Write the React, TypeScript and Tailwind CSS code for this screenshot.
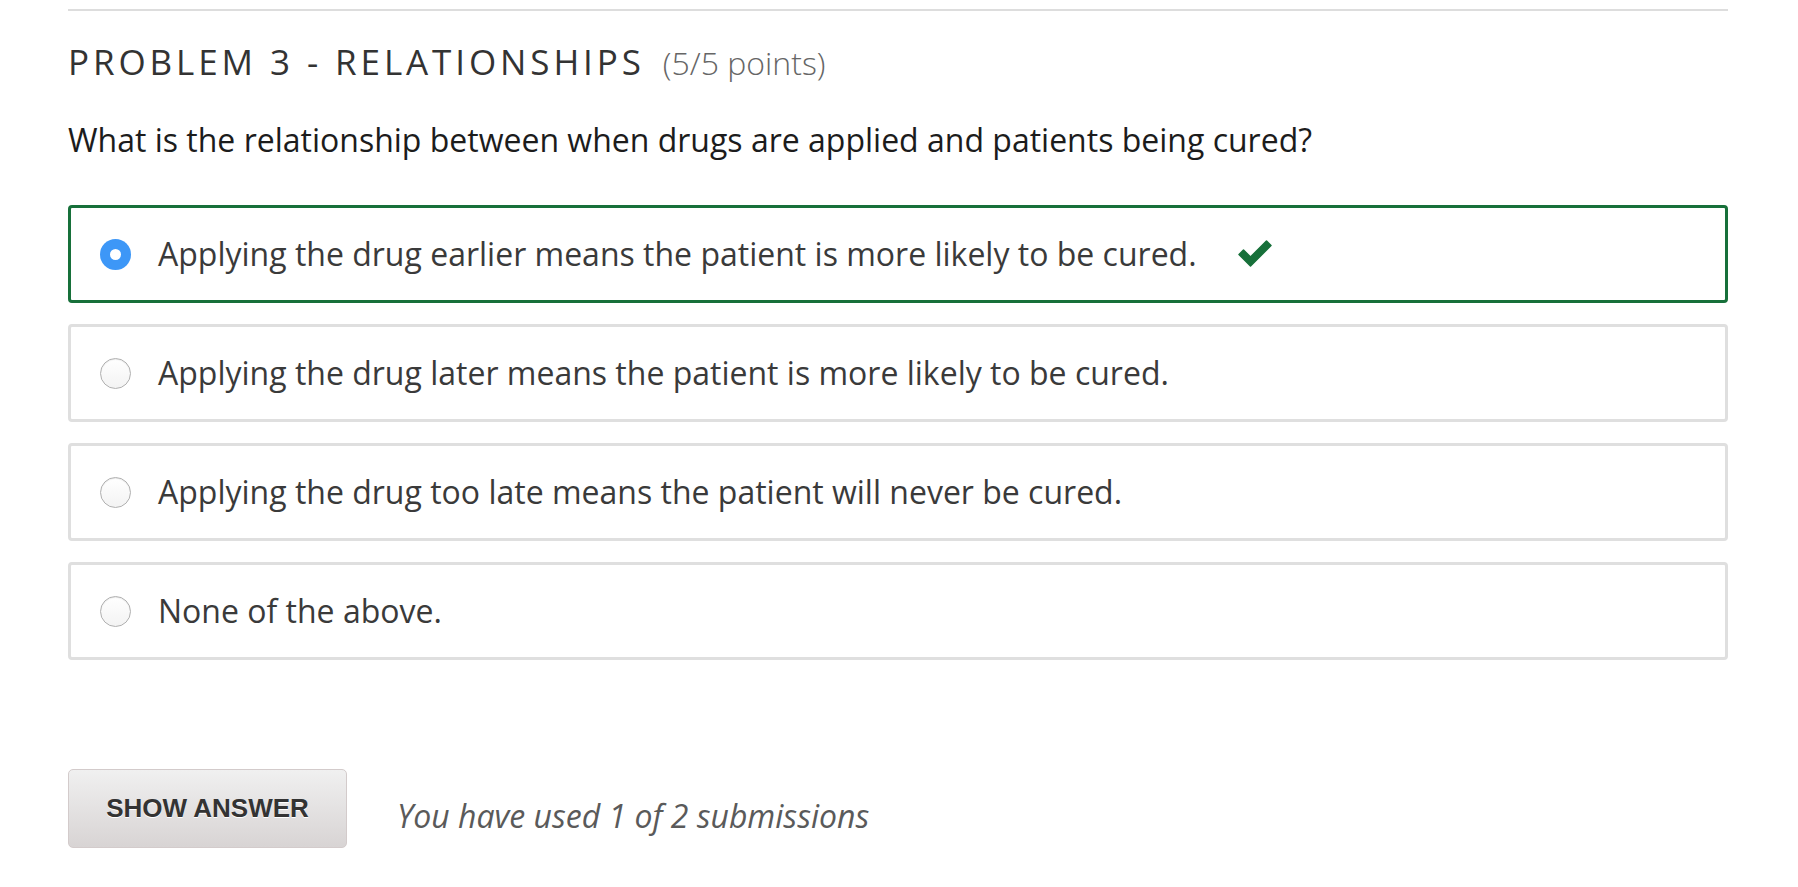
import React from 'react';

const options = [
  { id: 1, text: 'Applying the drug earlier means the patient is more likely to be cured.', selected: true },
  { id: 2, text: 'Applying the drug later means the patient is more likely to be cured.', selected: false },
  { id: 3, text: 'Applying the drug too late means the patient will never be cured.', selected: false },
  { id: 4, text: 'None of the above.', selected: false },
];

const CheckMark: React.FC = () => (
  <svg width="36" height="28" viewBox="0 0 36 28" className="ml-[40px] shrink-0">
    <path
      d="M2 14.5 L6.5 10 L13.5 17 L29.5 1 L34 5.5 L13.5 26 Z"
      fill="#17703a"
      stroke="#17703a"
      strokeWidth="1.5"
      strokeLinejoin="round"
    />
  </svg>
);

const App: React.FC = () => {
  return (
    <div className="min-h-screen bg-white px-[68px] pt-[9px]" style={{ fontFamily: '"Open Sans", "DejaVu Sans", sans-serif' }}>
      <div className="w-[1660px]">
        <div className="h-[2px] bg-[#dddddd]" />

        {/* Header */}
        <div className="mt-[33px] flex items-baseline leading-none">
          <h2 className="text-[35px] leading-none font-normal tracking-[3.9px] text-[#333333]">
            PROBLEM 3 - RELATIONSHIPS
          </h2>
          <span className="ml-[18px] text-[32px] leading-none font-light text-[#666666]">
            (5/5 points)
          </span>
        </div>

        <p className="mt-[45px] text-[32px] leading-none text-[#1c1c1c]">
          What is the relationship between when drugs are applied and patients being cured?
        </p>

        {/* Choices */}
        <div className="mt-[49px] flex flex-col gap-[21px]">
          {options.map((option) => (
            <label
              key={option.id}
              className={`flex h-[98px] items-center rounded-[4px] border-[3px] pl-[29px] ${
                option.selected ? 'border-[#17703a]' : 'border-[#dfdfdf]'
              }`}
            >
              {option.selected ? (
                <span className="flex h-[31px] w-[31px] shrink-0 items-center justify-center rounded-full bg-[#3d97f7]">
                  <span className="h-[11px] w-[11px] rounded-full bg-white" />
                </span>
              ) : (
                <span className="h-[31px] w-[31px] shrink-0 rounded-full border border-[#b0b0b0] bg-linear-to-b from-white to-[#f3f3f3] shadow-[inset_0_1px_1px_rgba(0,0,0,0.08)]" />
              )}
              <span className="ml-[27px] text-[32px] leading-none text-[#3a3a3a]">{option.text}</span>
              {option.selected && <CheckMark />}
            </label>
          ))}
        </div>

        {/* Actions */}
        <div className="mt-[109px] flex items-center">
          <button
            className="flex h-[79px] w-[279px] items-center justify-center rounded-[5px] border border-[#d3cbcb] bg-linear-to-b from-[#f0f0f0] to-[#d8d4d4] text-[26px] font-bold text-[#333333] [text-shadow:0_1px_0_#ffffff]"
            style={{ fontFamily: '"Liberation Sans", Arial, sans-serif' }}
          >
            SHOW ANSWER
          </button>
          <span className="ml-[50px] mt-[14px] text-[32px] italic text-[#5a5a5a]">
            You have used 1 of 2 submissions
          </span>
        </div>
      </div>
    </div>
  );
};

export default App;
